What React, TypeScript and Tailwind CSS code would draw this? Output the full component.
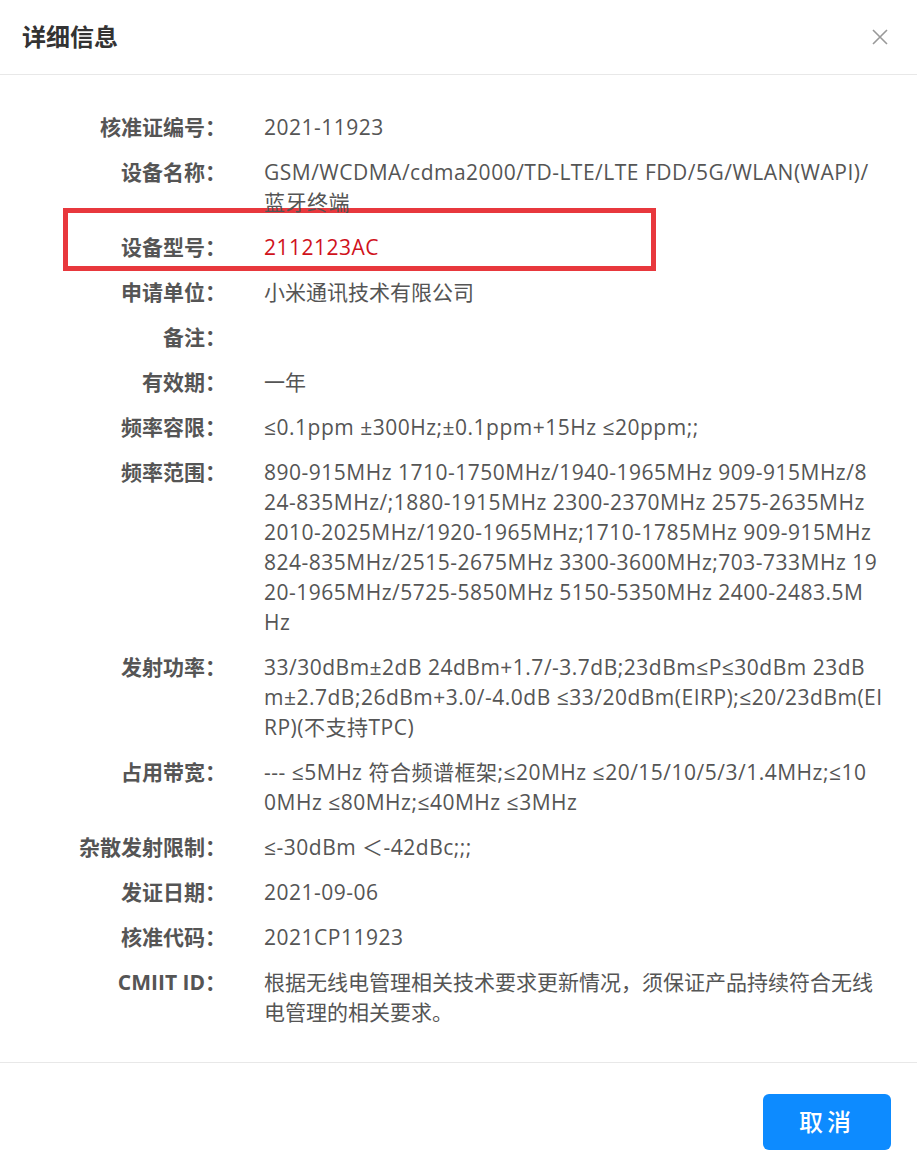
const rows: { label: string; lines: string[]; highlight?: boolean; cjk?: boolean }[] = [
  { label: "核准证编号：", lines: ["2021-11923"] },
  { label: "设备名称：", lines: ["GSM/WCDMA/cdma2000/TD-LTE/LTE FDD/5G/WLAN(WAPI)/", "蓝牙终端"] },
  { label: "设备型号：", lines: ["2112123AC"], highlight: true },
  { label: "申请单位：", lines: ["小米通讯技术有限公司"], cjk: true },
  { label: "备注：", lines: [""] },
  { label: "有效期：", lines: ["一年"], cjk: true },
  { label: "频率容限：", lines: ["≤0.1ppm ±300Hz;±0.1ppm+15Hz ≤20ppm;;"] },
  {
    label: "频率范围：",
    lines: [
      "890-915MHz 1710-1750MHz/1940-1965MHz 909-915MHz/8",
      "24-835MHz/;1880-1915MHz 2300-2370MHz 2575-2635MHz",
      "2010-2025MHz/1920-1965MHz;1710-1785MHz 909-915MHz",
      "824-835MHz/2515-2675MHz 3300-3600MHz;703-733MHz 19",
      "20-1965MHz/5725-5850MHz 5150-5350MHz 2400-2483.5M",
      "Hz",
    ],
  },
  {
    label: "发射功率：",
    lines: [
      "33/30dBm±2dB 24dBm+1.7/-3.7dB;23dBm≤P≤30dBm 23dB",
      "m±2.7dB;26dBm+3.0/-4.0dB ≤33/20dBm(EIRP);≤20/23dBm(EI",
      "RP)(不支持TPC)",
    ],
  },
  {
    label: "占用带宽：",
    lines: ["--- ≤5MHz 符合频谱框架;≤20MHz ≤20/15/10/5/3/1.4MHz;≤10", "0MHz ≤80MHz;≤40MHz ≤3MHz"],
  },
  { label: "杂散发射限制：", lines: ["≤-30dBm ＜-42dBc;;;"] },
  { label: "发证日期：", lines: ["2021-09-06"] },
  { label: "核准代码：", lines: ["2021CP11923"] },
  {
    label: "CMIIT ID：",
    lines: ["根据无线电管理相关技术要求更新情况，须保证产品持续符合无线", "电管理的相关要求。"],
    cjk: true,
  },
];

export default function App() {
  return (
    <div
      className="h-[1165px] w-[917px] overflow-hidden bg-white text-[#555]"
      style={{ fontFamily: '"Open Sans", "Noto Sans CJK SC", sans-serif' }}
    >
      <div className="flex h-[75px] items-center justify-between border-b border-[#e8e8e8] pl-[22px] pr-[28px]">
        <h2 className="text-[24px] font-bold text-[#333]">详细信息</h2>
        <svg width="18" height="18" viewBox="0 0 18 18" className="text-[#999]">
          <path d="M2 2L16 16M16 2L2 16" stroke="currentColor" strokeWidth="1.6" fill="none" />
        </svg>
      </div>

      <div className="h-[987px] pt-[37px]">
        {rows.map((row) => (
          <div key={row.label} className="relative mb-[15px] flex text-[21px] leading-[30px]">
            {row.highlight && (
              <div className="pointer-events-none absolute left-[63px] top-[-24px] h-[63px] w-[593px] border-[5px] border-[#e8383d] bg-white" />
            )}
            <div className="relative z-10 w-[226px] shrink-0 text-right font-bold whitespace-nowrap">{row.label}</div>
            <div
              className={`relative z-10 ml-[38px] ${row.cjk ? "tracking-normal" : "tracking-[0.5px]"} ${
                row.highlight ? "text-[#d0121b]" : ""
              }`}
            >
              {row.lines.map((line, i) => (
                <div key={i} className="h-[30px] whitespace-nowrap">
                  {line}
                </div>
              ))}
            </div>
          </div>
        ))}
      </div>

      <div className="flex h-[103px] items-start justify-end border-t border-[#e8e8e8] pr-[26px] pt-[31px]">
        <button className="flex h-[56px] w-[128px] items-center justify-center rounded-[6px] bg-[#0d8bff] text-[24px] font-medium tracking-[4px] text-white">
          取消
        </button>
      </div>
    </div>
  );
}
